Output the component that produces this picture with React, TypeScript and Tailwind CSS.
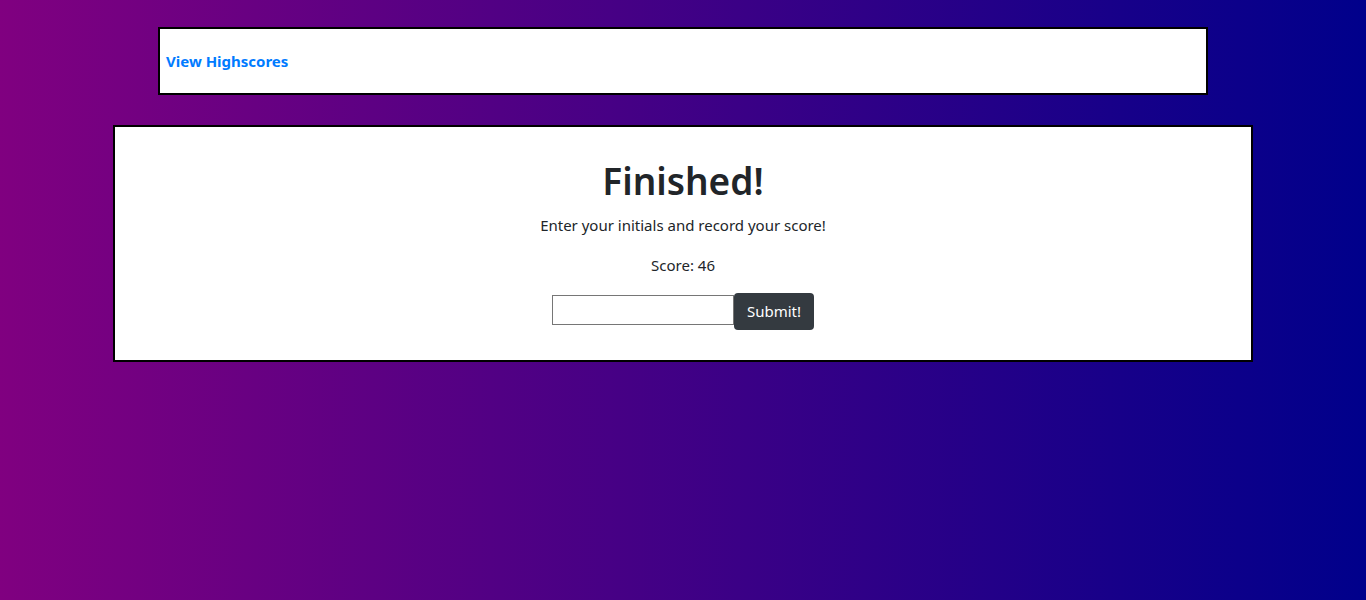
import React from "react";

export default function App() {
  return (
    <div
      className="min-h-screen w-full bg-[linear-gradient(to_right,#800080,#00008b)] pt-[27px]"
      style={{ fontFamily: '"Noto Sans", "Open Sans", sans-serif' }}
    >
      <div className="mx-auto flex h-[68px] w-[1050px] items-center border-2 border-black bg-white pl-[6px]">
        <a className="text-[15px] font-bold text-[#007bff]" href="#">
          View Highscores
        </a>
      </div>
      <div className="mx-auto mt-[30px] flex w-[1140px] flex-col items-center border-2 border-black bg-white pb-[30px] pt-[30px] text-[#212529]">
        <h1 className="mb-[8px] text-[37px] font-semibold leading-[48px]">Finished!</h1>
        <p className="mb-[16px] text-[15px] leading-[24px]">Enter your initials and record your score!</p>
        <p className="mb-[16px] text-[15px] leading-[24px]">Score: 46</p>
        <div className="flex items-start">
          <input className="mt-[2px] h-[30px] w-[182px] border border-[#767676] bg-white" type="text" />
          <button className="h-[37px] w-[80px] rounded-[4px] bg-[#343a40] text-[15px] text-white">Submit!</button>
        </div>
      </div>
    </div>
  );
}
